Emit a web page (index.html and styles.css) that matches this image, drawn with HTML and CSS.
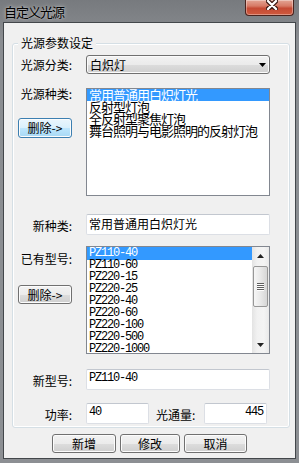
FILE: index.html
```html
<!DOCTYPE html>
<html lang="zh-CN">
<head>
    <meta charset="UTF-8">
    <title>自定义光源</title>
    <link rel="stylesheet" href="styles.css">
</head>
<body>

<div class="window">
    <div class="titlebar">
        <span class="title">自定义光源</span>
        <div class="close-btn">
            <svg width="12" height="10" viewBox="0 0 12 10">
                <path d="M2 1L10 9M10 1L2 9" stroke="#3a1812" stroke-width="4.6" stroke-linecap="round"/>
                <path d="M2 1L10 9M10 1L2 9" stroke="#fff" stroke-width="2.4" stroke-linecap="round"/>
            </svg>
        </div>
    </div>

    <div class="client">
        <div class="group">
            <span class="group-title">光源参数设定</span>

            <!-- 光源分类 -->
            <div class="row row-combo">
                <div class="side"><span class="lbl">光源分类:</span></div>
                <div class="combo">
                    <span>白炽灯</span>
                    <svg class="combo-arrow" width="7" height="4" viewBox="0 0 7 4"><path d="M0 0H7L3.5 4Z"/></svg>
                </div>
            </div>

            <!-- 光源种类 -->
            <div class="row row-list row-kind">
                <div class="side side-top">
                    <span class="lbl">光源种类:</span>
                    <button class="btn btn-del btn-hot">删除-&gt;</button>
                </div>
                <div class="listbox">
                    <div class="items items-cjk">
                        <div class="item selected">常用普通用白炽灯光</div>
                        <div class="item">反射型灯泡</div>
                        <div class="item">全反射型聚焦灯泡</div>
                        <div class="item">舞台照明与电影照明的反射灯泡</div>
                    </div>
                </div>
            </div>

            <!-- 新种类 -->
            <div class="row row-text row-newkind">
                <div class="side"><span class="lbl">新种类:</span></div>
                <div class="textbox">常用普通用白炽灯光</div>
            </div>

            <!-- 已有型号 -->
            <div class="row row-list row-models">
                <div class="side side-top">
                    <span class="lbl">已有型号:</span>
                    <button class="btn btn-del">删除-&gt;</button>
                </div>
                <div class="listbox">
                    <div class="items mono">
                        <div class="item selected">PZ110-40</div>
                        <div class="item">PZ110-60</div>
                        <div class="item">PZ220-15</div>
                        <div class="item">PZ220-25</div>
                        <div class="item">PZ220-40</div>
                        <div class="item">PZ220-60</div>
                        <div class="item">PZ220-100</div>
                        <div class="item">PZ220-500</div>
                        <div class="item">PZ220-1000</div>
                    </div>
                    <div class="scrollbar">
                        <div class="sb-arrow">
                            <svg width="7" height="4" viewBox="0 0 7 4"><path d="M0 4H7L3.5 0Z"/></svg>
                        </div>
                        <div class="sb-track">
                            <div class="sb-thumb">
                                <span></span><span></span><span></span><span></span>
                            </div>
                        </div>
                        <div class="sb-arrow">
                            <svg width="7" height="4" viewBox="0 0 7 4"><path d="M0 0H7L3.5 4Z"/></svg>
                        </div>
                    </div>
                </div>
            </div>

            <!-- 新型号 -->
            <div class="row row-text row-newmodel">
                <div class="side"><span class="lbl">新型号:</span></div>
                <div class="textbox mono">PZ110-40</div>
            </div>

            <!-- 功率 / 光通量 -->
            <div class="row row-text row-power">
                <div class="side"><span class="lbl">功率:</span></div>
                <div class="textbox textbox-small mono">40</div>
                <span class="lbl lbl-flux">光通量:</span>
                <div class="textbox textbox-small textbox-right mono">445</div>
            </div>
        </div>

        <div class="actions">
            <button class="btn btn-add">新增</button>
            <button class="btn btn-edit">修改</button>
            <button class="btn btn-cancel">取消</button>
        </div>
    </div>
</div>

</body>
</html>
```

FILE: styles.css
```css
body {
    margin: 0;
    padding: 0;
    font-family: "Noto Sans CJK SC", "Noto Sans", sans-serif;
    font-size: 12px;
    color: #000;
    background: #85888c;
}
.window {
    width: 299px;
    height: 463px;
    display: flex;
    flex-direction: column;
    background: linear-gradient(#777a7e, #8a8d91 40px, #8c8f93);
    box-sizing: border-box;
}
.titlebar {
    height: 22px;
    display: flex;
    align-items: flex-start;
}
.title {
    margin: 4px 0 0 4px;
    font-size: 13px;
    line-height: 15px;
    letter-spacing: -1px;
    color: #000;
    text-shadow: 0 0 4px rgba(255,255,255,0.55), 0 0 2px rgba(255,255,255,0.35);
}
.close-btn {
    margin-left: auto;
    margin-right: 5px;
    width: 43px;
    height: 15px;
    border: 1px solid #4a231d;
    border-top: none;
    border-radius: 0 0 4px 4px;
    background: linear-gradient(#e3a595 0%, #d77a66 40%, #c54a34 55%, #cf5a3e 100%);
    box-shadow: inset 0 0 0 1px rgba(255,255,255,0.35);
    display: flex;
    justify-content: center;
    align-items: flex-start;
    padding-left: 4px;
    box-sizing: content-box;
}
.close-btn svg {
    display: block;
}
.client {
    flex: 1;
    margin: 0 3px 4px 3px;
    border: 1px solid #43474b;
    background: #f0f0f0;
}

/* group box */
.group {
    position: relative;
    margin: 20px 5px 0 8px;
    padding: 11px 19px 3px 0;
    border: 1px solid #d5dfe5;
    border-radius: 3px;
    box-shadow: inset 0 0 0 1px #fff;
}
.group-title {
    position: absolute;
    left: 5px;
    top: -8px;
    padding: 0 3px;
    background: #f0f0f0;
    line-height: 14px;
}

.row {
    display: flex;
    align-items: center;
}
.side {
    width: 59px;
    margin-right: 14px;
    display: flex;
    flex-direction: column;
    align-items: flex-end;
    flex-shrink: 0;
}
.side-top {
    align-self: flex-start;
}
.lbl {
    line-height: 14px;
    white-space: nowrap;
}
.row-combo { height: 19px; }
.row-kind { margin-top: 14px; }
.row-kind .lbl { margin-top: -1px; }
.row-kind .btn-del { margin-top: 17px; }
.row-newkind { margin-top: 18px; }
.row-models { margin-top: 11px; }
.row-models .lbl { margin-top: 6px; }
.row-models .btn-del { margin-top: 19px; }
.row-newmodel { margin-top: 15px; }
.row-power { margin-top: 13px; }
.row-text { height: 21px; }
.row-text .lbl { margin-top: 2px; }

/* combo box */
.combo {
    flex: 1;
    height: 19px;
    box-sizing: border-box;
    border: 1px solid #707070;
    border-radius: 3px;
    background: linear-gradient(#f2f2f2, #ebebeb 50%, #dddddd 50%, #cfcfcf);
    box-shadow: inset 0 0 0 1px #fbfbfb;
    display: flex;
    align-items: center;
    padding: 0 3px 0 3px;
    line-height: 14px;
}
.combo-arrow {
    margin-left: auto;
    display: block;
}

/* list boxes */
.listbox {
    flex: 1;
    height: 108px;
    box-sizing: border-box;
    border: 1px solid #828790;
    background: #fff;
    display: flex;
    overflow: hidden;
}
.items {
    flex: 1;
    overflow: hidden;
}
.item {
    height: 12px;
    line-height: 12px;
    padding-left: 2px;
    white-space: nowrap;
}
.items-cjk .item {
    font-size: 13px;
    letter-spacing: -1px;
}
.item.selected {
    background: #3399ff;
    color: #fff;
}
.mono {
    font-family: "Liberation Mono", monospace;
    font-size: 12px;
    letter-spacing: -1.2px;
}
.mono .item {
    height: 12px;
    line-height: 13px;
}
.mono .item.selected {
    height: 13px;
    margin-bottom: -1px;
}

/* scroll bar */
.scrollbar {
    width: 17px;
    display: flex;
    flex-direction: column;
    background: linear-gradient(to right, #e3e3e3, #f1f1f1 30%, #f4f4f4 70%, #e9e9e9);
}
.sb-arrow {
    height: 17px;
    display: flex;
    justify-content: center;
    align-items: center;
}
.sb-arrow svg path {
    fill: #222;
}
.sb-track {
    flex: 1;
    padding-top: 2px;
}
.sb-thumb {
    margin-left: 1px;
    width: 13px;
    height: 39px;
    border: 1px solid #979797;
    border-radius: 2px;
    background: linear-gradient(to right, #f6f6f6, #e8e8e8 50%, #d6d6d6);
    display: flex;
    flex-direction: column;
    align-items: center;
    justify-content: center;
    gap: 1px;
}
.sb-thumb span {
    width: 7px;
    height: 1px;
    background: #5e5e5e;
    box-shadow: 0 1px 0 #fdfdfd;
}

/* text boxes */
.textbox {
    flex: 1;
    height: 21px;
    box-sizing: border-box;
    border: 1px solid #dcdfe5;
    border-top-color: #c2c7cf;
    border-radius: 2px;
    background: #fff;
    padding: 1px 2px 0 2px;
    line-height: 16px;
    white-space: nowrap;
}
.textbox.mono {
    padding-top: 2px;
    line-height: 13px;
}
.textbox-small {
    flex: none;
    width: 63px;
}
.textbox-right {
    text-align: right;
    padding-right: 3px;
}
.lbl-flux {
    width: 48px;
    margin-left: 7px;
}

/* buttons */
.btn {
    font-family: "Noto Sans CJK SC", "Noto Sans", sans-serif;
    font-size: 12px;
    line-height: 14px;
    color: #000;
    height: 19px;
    padding: 0;
    border: 1px solid #707070;
    border-radius: 3px;
    background: linear-gradient(#f2f2f2, #ebebeb 50%, #dddddd 50%, #cfcfcf);
    box-shadow: inset 0 0 0 1px #fcfcfc;
    cursor: pointer;
}
.btn-del {
    align-self: flex-start;
    margin-left: 5px;
    width: 54px;
}
.btn-hot {
    height: 20px;
    border-color: #3c7fb1;
    background: linear-gradient(#eaf6fd, #d9f0fc 50%, #bee6fd 50%, #a7d9f5);
}
.actions {
    display: flex;
    gap: 4px;
    margin: 6px 0 0 48px;
}
.btn-add { width: 64px; }
.btn-edit { width: 60px; }
.btn-cancel { width: 63px; }
```
